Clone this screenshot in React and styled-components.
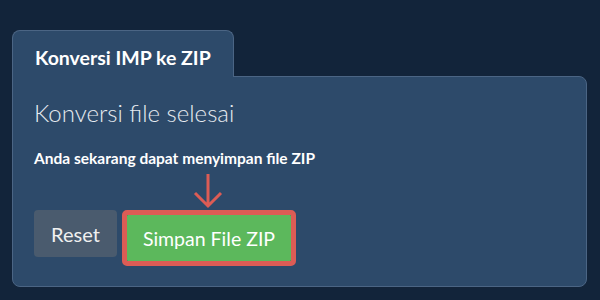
import React from "react";
import styled, { createGlobalStyle } from "styled-components";

const GlobalStyle = createGlobalStyle`
  html, body {
    margin: 0;
    padding: 0;
    background: #12243a;
  }
  body {
    font-family: Lato, "Open Sans", sans-serif;
  }
`;

function App() {
  return (
    <>
      <GlobalStyle />
      <Page>
        <Card>
          <Tab>Konversi IMP ke ZIP</Tab>
          <Panel>
            <Heading>Konversi file selesai</Heading>
            <Message>Anda sekarang dapat menyimpan file ZIP</Message>
            <Actions>
              <ResetButton>Reset</ResetButton>
              <Highlight>
                <Arrow width="32" height="36" viewBox="0 0 32 36">
                  <path d="M16 1 V33 M3 20 L16 33 L29 20" fill="none" stroke="#dc5c55" strokeWidth="3" />
                </Arrow>
                <SaveButton>Simpan File ZIP</SaveButton>
              </Highlight>
            </Actions>
          </Panel>
        </Card>
      </Page>
    </>
  );
}

export default App;

const Page = styled.div`
  width: 600px;
  height: 300px;
  padding: 30px 0 0 12px;
  box-sizing: border-box;
`;

const Card = styled.div`
  width: 575px;
  display: flex;
  flex-direction: column;
  align-items: flex-start;
`;

const Tab = styled.div`
  position: relative;
  z-index: 1;
  width: 222px;
  height: 47px;
  box-sizing: border-box;
  padding: 15px 0 0 22px;
  background: #2d4a6a;
  border: 1px solid #4b6584;
  border-bottom: none;
  border-radius: 8px 8px 0 0;
  color: #ffffff;
  font-size: 19.5px;
  font-weight: 700;
  margin-bottom: -1px;
`;

const Panel = styled.div`
  width: 100%;
  height: 211px;
  box-sizing: border-box;
  padding: 21px 20px 0 21px;
  background: #2d4a6a;
  border: 1px solid #4b6584;
  border-radius: 0 8px 8px 8px;
`;

const Heading = styled.h2`
  margin: 0;
  color: #e6ebf0;
  font-size: 24px;
  font-weight: 300;
  line-height: 29px;
`;

const Message = styled.p`
  margin: 22px 0 0 0;
  color: #ffffff;
  font-size: 15.5px;
  font-weight: 700;
  line-height: 18px;
`;

const Actions = styled.div`
  display: flex;
  align-items: flex-start;
  gap: 5px;
  margin-top: 43px;
`;

const ResetButton = styled.button`
  width: 83px;
  height: 47px;
  border: none;
  border-radius: 4px;
  background: #4a5b6e;
  color: #f0f0f0;
  font-family: Lato, sans-serif;
  font-size: 20px;
  cursor: pointer;
`;

const Highlight = styled.div`
  position: relative;
  border: 5px solid #dc5c55;
  border-radius: 5px;
  display: flex;
`;

const Arrow = styled.svg`
  position: absolute;
  left: 65px;
  top: -42px;
`;

const SaveButton = styled.button`
  width: 164px;
  height: 46px;
  border: none;
  border-radius: 1px;
  background: #5cb85c;
  color: #ffffff;
  font-family: Lato, sans-serif;
  font-size: 19.5px;
  cursor: pointer;
`;
